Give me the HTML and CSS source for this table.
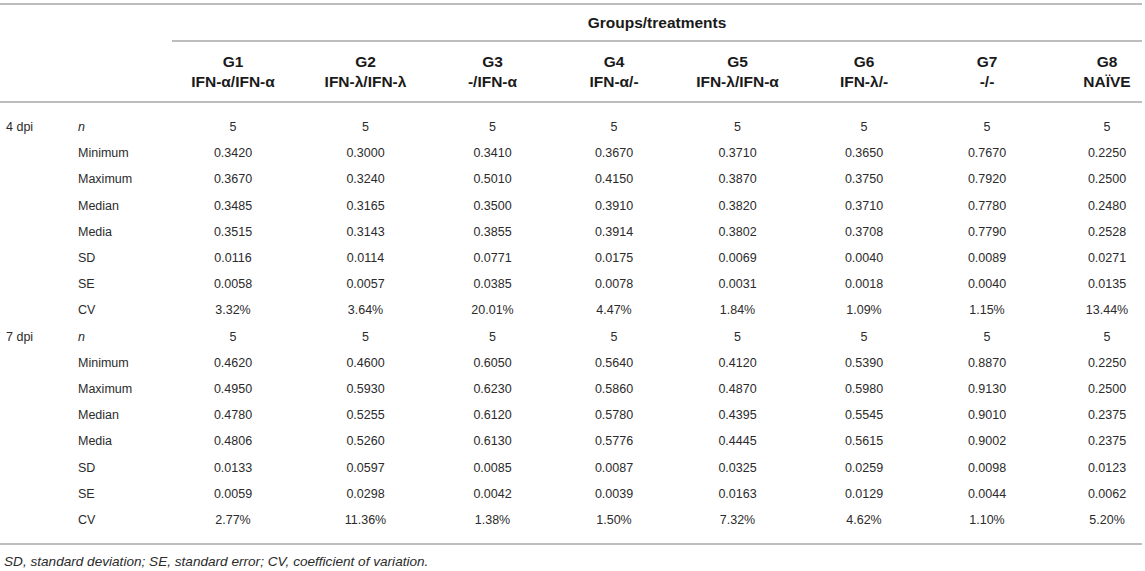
FILE: index.html
```html
<!DOCTYPE html>
<html lang="en">
<head>
<meta charset="utf-8">
<title>Groups/treatments</title>
<link rel="stylesheet" href="styles.css">
</head>
<body>
<table class="data">
  <colgroup>
    <col class="c-dpi">
    <col class="c-stat">
    <col class="c-g1">
    <col class="c-g2">
    <col class="c-g3">
    <col class="c-g4">
    <col class="c-g5">
    <col class="c-g6">
    <col class="c-g7">
    <col class="c-g8">
  </colgroup>
  <thead>
    <tr class="h1">
      <th></th>
      <th></th>
      <th colspan="8" class="span">Groups/treatments</th>
    </tr>
    <tr class="h2">
      <th></th>
      <th></th>
      <th class="first-col">G1<br>IFN-α/IFN-α</th>
      <th>G2<br>IFN-λ/IFN-λ</th>
      <th>G3<br>-/IFN-α</th>
      <th>G4<br>IFN-α/-</th>
      <th>G5<br>IFN-λ/IFN-α</th>
      <th>G6<br>IFN-λ/-</th>
      <th>G7<br>-/-</th>
      <th class="last">G8<br>NAÏVE</th>
    </tr>
  </thead>
  <tbody>
    <tr class="first">
      <td class="dpi">4 dpi</td><td class="stat"><i>n</i></td>
      <td class="first-col">5</td><td>5</td><td>5</td><td>5</td><td>5</td><td>5</td><td>5</td><td class="last">5</td>
    </tr>
    <tr>
      <td></td><td class="stat">Minimum</td>
      <td class="first-col">0.3420</td><td>0.3000</td><td>0.3410</td><td>0.3670</td><td>0.3710</td><td>0.3650</td><td>0.7670</td><td class="last">0.2250</td>
    </tr>
    <tr>
      <td></td><td class="stat">Maximum</td>
      <td class="first-col">0.3670</td><td>0.3240</td><td>0.5010</td><td>0.4150</td><td>0.3870</td><td>0.3750</td><td>0.7920</td><td class="last">0.2500</td>
    </tr>
    <tr>
      <td></td><td class="stat">Median</td>
      <td class="first-col">0.3485</td><td>0.3165</td><td>0.3500</td><td>0.3910</td><td>0.3820</td><td>0.3710</td><td>0.7780</td><td class="last">0.2480</td>
    </tr>
    <tr>
      <td></td><td class="stat">Media</td>
      <td class="first-col">0.3515</td><td>0.3143</td><td>0.3855</td><td>0.3914</td><td>0.3802</td><td>0.3708</td><td>0.7790</td><td class="last">0.2528</td>
    </tr>
    <tr>
      <td></td><td class="stat">SD</td>
      <td class="first-col">0.0116</td><td>0.0114</td><td>0.0771</td><td>0.0175</td><td>0.0069</td><td>0.0040</td><td>0.0089</td><td class="last">0.0271</td>
    </tr>
    <tr>
      <td></td><td class="stat">SE</td>
      <td class="first-col">0.0058</td><td>0.0057</td><td>0.0385</td><td>0.0078</td><td>0.0031</td><td>0.0018</td><td>0.0040</td><td class="last">0.0135</td>
    </tr>
    <tr>
      <td></td><td class="stat">CV</td>
      <td class="first-col">3.32%</td><td>3.64%</td><td>20.01%</td><td>4.47%</td><td>1.84%</td><td>1.09%</td><td>1.15%</td><td class="last">13.44%</td>
    </tr>
    <tr>
      <td class="dpi">7 dpi</td><td class="stat"><i>n</i></td>
      <td class="first-col">5</td><td>5</td><td>5</td><td>5</td><td>5</td><td>5</td><td>5</td><td class="last">5</td>
    </tr>
    <tr>
      <td></td><td class="stat">Minimum</td>
      <td class="first-col">0.4620</td><td>0.4600</td><td>0.6050</td><td>0.5640</td><td>0.4120</td><td>0.5390</td><td>0.8870</td><td class="last">0.2250</td>
    </tr>
    <tr>
      <td></td><td class="stat">Maximum</td>
      <td class="first-col">0.4950</td><td>0.5930</td><td>0.6230</td><td>0.5860</td><td>0.4870</td><td>0.5980</td><td>0.9130</td><td class="last">0.2500</td>
    </tr>
    <tr>
      <td></td><td class="stat">Median</td>
      <td class="first-col">0.4780</td><td>0.5255</td><td>0.6120</td><td>0.5780</td><td>0.4395</td><td>0.5545</td><td>0.9010</td><td class="last">0.2375</td>
    </tr>
    <tr>
      <td></td><td class="stat">Media</td>
      <td class="first-col">0.4806</td><td>0.5260</td><td>0.6130</td><td>0.5776</td><td>0.4445</td><td>0.5615</td><td>0.9002</td><td class="last">0.2375</td>
    </tr>
    <tr>
      <td></td><td class="stat">SD</td>
      <td class="first-col">0.0133</td><td>0.0597</td><td>0.0085</td><td>0.0087</td><td>0.0325</td><td>0.0259</td><td>0.0098</td><td class="last">0.0123</td>
    </tr>
    <tr>
      <td></td><td class="stat">SE</td>
      <td class="first-col">0.0059</td><td>0.0298</td><td>0.0042</td><td>0.0039</td><td>0.0163</td><td>0.0129</td><td>0.0044</td><td class="last">0.0062</td>
    </tr>
    <tr class="final">
      <td></td><td class="stat">CV</td>
      <td class="first-col">2.77%</td><td>11.36%</td><td>1.38%</td><td>1.50%</td><td>7.32%</td><td>4.62%</td><td>1.10%</td><td class="last">5.20%</td>
    </tr>
  </tbody>
</table>
<p class="note">SD, standard deviation; SE, standard error; CV, coefficient of variation.</p>
</body>
</html>
```
FILE: styles.css
```css
html, body {
  margin: 0;
  padding: 0;
  background: #ffffff;
}

body {
  padding-top: 3px;
  font-family: "Liberation Sans", Arial, Helvetica, sans-serif;
  color: #2b2b2b;
}

.data {
  border-collapse: collapse;
  table-layout: fixed;
  width: 1142px;
  border-top: 2px solid #bdbdbd;
  border-bottom: 2px solid #bdbdbd;
}

.c-dpi { width: 72px; }
.c-stat { width: 100px; }
.c-g1 { width: 128px; }
.c-g2 { width: 131px; }
.c-g3 { width: 123px; }
.c-g4 { width: 120px; }
.c-g5 { width: 127px; }
.c-g6 { width: 126px; }
.c-g7 { width: 120px; }
.c-g8 { width: 95px; }

.data th {
  font-weight: bold;
  font-size: 15.5px;
  color: #1a1a1a;
  text-align: center;
  padding: 0;
  line-height: 20px;
}

.h1 th {
  height: 35px;
}

.h1 .span {
  border-bottom: 2px solid #bdbdbd;
}

.h2 th {
  height: 59px;
  border-bottom: 2px solid #bdbdbd;
}

.data td {
  font-size: 12.5px;
  text-align: center;
  padding: 0;
  height: 26.2px;
  line-height: 26px;
  white-space: nowrap;
  color: #2b2b2b;
}

.data .first-col {
  padding-right: 6px;
}

.data .last {
  padding-left: 25px;
}

.data td.dpi {
  text-align: left;
  padding-left: 6px;
}

.data td.stat {
  text-align: left;
  padding-left: 6px;
}

.first td {
  padding-top: 11px;
}

.final td {
  padding-bottom: 10px;
}

.note {
  margin: 0;
  padding: 7px 0 0 4px;
  font-size: 13.6px;
  font-style: italic;
  line-height: 20px;
  color: #2b2b2b;
}
```
